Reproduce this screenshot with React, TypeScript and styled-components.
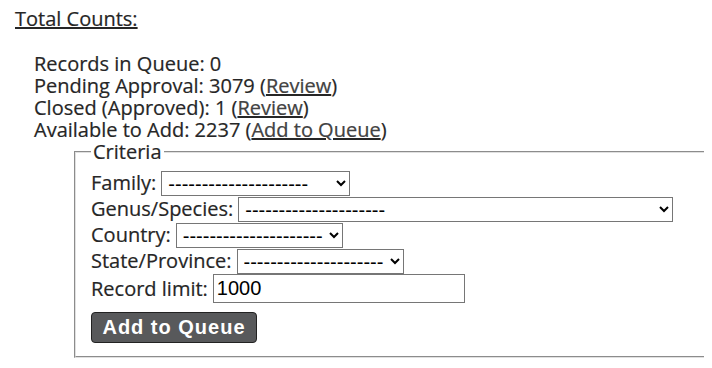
import * as React from 'react'
import styled, { createGlobalStyle } from 'styled-components'

const GlobalStyle = createGlobalStyle`
  html, body {
    overflow: hidden;
  }
  body {
    margin: 8px;
    background: #fff;
    color: #262626;
    font-family: "Open Sans", "Liberation Sans", sans-serif;
    font-size: 20px;
    line-height: 22px;
    -webkit-text-stroke: 0.2px #262626;
  }
`

const Page = styled.div`
  padding: 0 0 0 7px;
`

const Title = styled.div`
  text-decoration: underline;
  margin-bottom: 23px;
`

const Counts = styled.div`
  margin-left: 19px;
`

const CountLine = styled.div`
  white-space: nowrap;
`

const TextLink = styled.a`
  color: #444;
  text-decoration: underline;
  cursor: pointer;
`

const Criteria = styled.fieldset`
  margin: 0 0 0 40px;
  width: 640px;
  border: 2px groove #e0e0e0;
  padding: 0.35em 0.75em 0.625em;
`

const Legend = styled.legend`
  padding: 0 2px;
`

const Row = styled.div<{ $h?: number }>`
  display: flex;
  align-items: center;
  gap: 5px;
  height: ${p => p.$h ?? 26}px;
  white-space: nowrap;
`

const Select = styled.select<{ $w: number }>`
  width: ${p => p.$w}px;
  height: 25px;
  box-sizing: border-box;
  font-family: "Liberation Sans", Arial, sans-serif;
  font-size: 20px;
  color: #000;
  -webkit-text-stroke: 0;
  background: #fff;
  border: 1px solid #767676;
  border-radius: 0;
  padding: 0 0 0 2px;
  margin: 0;
`

const TextInput = styled.input`
  width: 252px;
  height: 29px;
  box-sizing: border-box;
  font-family: "Liberation Sans", Arial, sans-serif;
  font-size: 20px;
  color: #000;
  -webkit-text-stroke: 0;
  border: 1px solid #767676;
  padding: 0 3px;
  margin: 0;
`

const SubmitButton = styled.button`
  margin-top: 9px;
  width: 166px;
  height: 31px;
  box-sizing: border-box;
  background: #58595b;
  color: #fff;
  -webkit-text-stroke: 0;
  border: 1px solid #222;
  border-radius: 4px;
  font-family: "Liberation Sans", Arial, sans-serif;
  font-weight: bold;
  font-size: 20px;
  letter-spacing: 1px;
  padding: 0;
  cursor: pointer;
`

const DASHES = '---------------------'

const App: React.FC = () => {
  return (
    <>
      <GlobalStyle />
      <Page>
        <Title>Total Counts:</Title>
        <Counts>
          <CountLine>Records in Queue: 0</CountLine>
          <CountLine>
            Pending Approval: 3079 (<TextLink>Review</TextLink>)
          </CountLine>
          <CountLine>
            Closed (Approved): 1 (<TextLink>Review</TextLink>)
          </CountLine>
          <CountLine>
            Available to Add: 2237 (<TextLink>Add to Queue</TextLink>)
          </CountLine>
          <Criteria>
            <Legend>Criteria</Legend>
            <Row>
              Family:
              <Select $w={189} defaultValue="">
                <option value="">{DASHES}</option>
              </Select>
            </Row>
            <Row>
              Genus/Species:
              <Select $w={435} defaultValue="">
                <option value="">{DASHES}</option>
              </Select>
            </Row>
            <Row>
              Country:
              <Select $w={167} defaultValue="">
                <option value="">{DASHES}</option>
              </Select>
            </Row>
            <Row>
              State/Province:
              <Select $w={167} defaultValue="">
                <option value="">{DASHES}</option>
              </Select>
            </Row>
            <Row $h={29}>
              Record limit:
              <TextInput type="text" defaultValue="1000" />
            </Row>
            <SubmitButton type="button">Add to Queue</SubmitButton>
          </Criteria>
        </Counts>
      </Page>
    </>
  )
}

export default App
